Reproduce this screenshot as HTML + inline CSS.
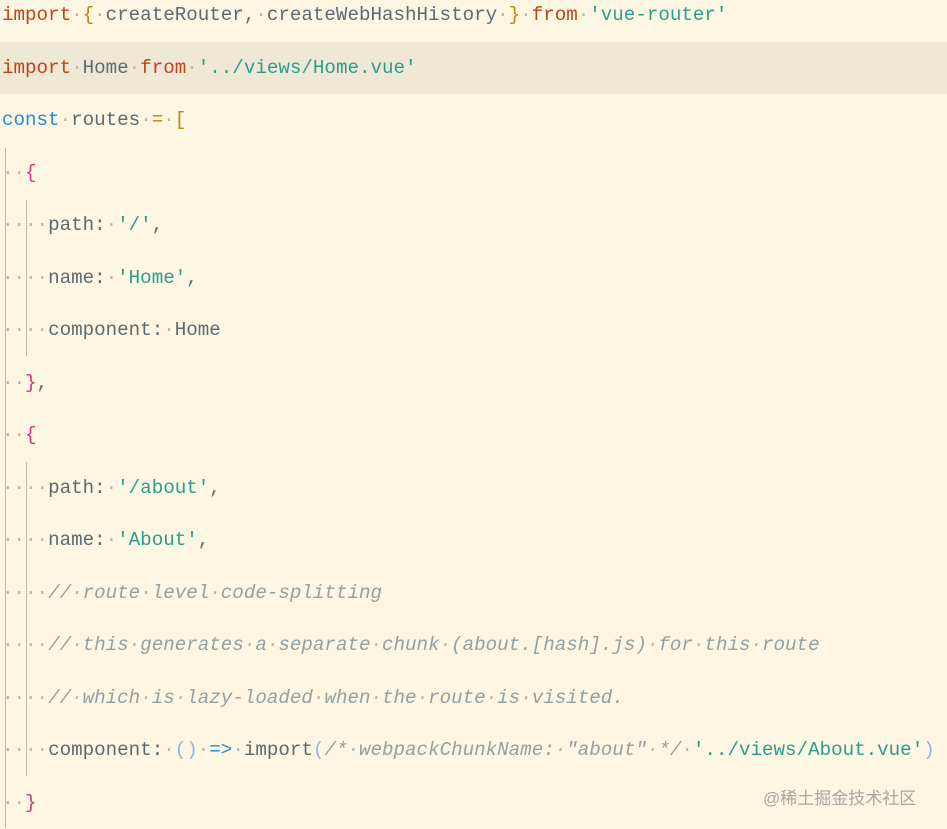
<!DOCTYPE html>
<html><head><meta charset="utf-8"><style>
body{margin:0;width:947px;height:828px;overflow:hidden;background:#fdf6e3;position:relative}
.code{position:absolute;left:2px;top:-11px;font-family:"Liberation Mono",monospace;font-size:19.2px;color:#5b6b70}
.l{height:52.5px;line-height:52.5px;position:relative;white-space:pre}
.hl{background:#eee8d5;margin-left:-2px;padding-left:2px;width:947px}
.k{color:#c0441a}.y{color:#b58900}.s{color:#2a9d8f}.b{color:#268bd2}.m{color:#d33682}
.c{color:#93a1a1;font-style:italic}.d{color:#b9b6a6}.p{color:#8fb8dc}
.g{position:absolute;width:1px;background:#bfbcae}
.wm{position:absolute;left:763px;top:784px;font-family:"Liberation Sans","Noto Sans CJK SC",sans-serif;font-size:17px;color:#a8a79e}
</style></head><body>
<div class="g" style="left:5px;top:148px;height:680px"></div>
<div class="g" style="left:26px;top:200px;height:156px"></div>
<div class="g" style="left:26px;top:462px;height:314px"></div>
<div class="code"><div class="l"><span class="k">import</span><span class="d">·</span><span class="y">{</span><span class="d">·</span>createRouter,<span class="d">·</span>createWebHashHistory<span class="d">·</span><span class="y">}</span><span class="d">·</span><span class="k">from</span><span class="d">·</span><span class="s">'vue-router'</span></div><div class="l hl"><span class="k">import</span><span class="d">·</span>Home<span class="d">·</span><span class="k">from</span><span class="d">·</span><span class="s">'../views/Home.vue'</span></div><div class="l"><span class="b">const</span><span class="d">·</span>routes<span class="d">·</span><span class="y">=</span><span class="d">·</span><span class="y">[</span></div><div class="l"><span class="d">··</span><span class="m">{</span></div><div class="l"><span class="d">····</span>path:<span class="d">·</span><span class="s">'/'</span>,</div><div class="l"><span class="d">····</span>name:<span class="d">·</span><span class="s">'Home'</span>,</div><div class="l"><span class="d">····</span>component:<span class="d">·</span>Home</div><div class="l"><span class="d">··</span><span class="m">}</span>,</div><div class="l"><span class="d">··</span><span class="m">{</span></div><div class="l"><span class="d">····</span>path:<span class="d">·</span><span class="s">'/about'</span>,</div><div class="l"><span class="d">····</span>name:<span class="d">·</span><span class="s">'About'</span>,</div><div class="l"><span class="d">····</span><span class="c">//<span class="d">·</span>route<span class="d">·</span>level<span class="d">·</span>code-splitting</span></div><div class="l"><span class="d">····</span><span class="c">//<span class="d">·</span>this<span class="d">·</span>generates<span class="d">·</span>a<span class="d">·</span>separate<span class="d">·</span>chunk<span class="d">·</span>(about.[hash].js)<span class="d">·</span>for<span class="d">·</span>this<span class="d">·</span>route</span></div><div class="l"><span class="d">····</span><span class="c">//<span class="d">·</span>which<span class="d">·</span>is<span class="d">·</span>lazy-loaded<span class="d">·</span>when<span class="d">·</span>the<span class="d">·</span>route<span class="d">·</span>is<span class="d">·</span>visited.</span></div><div class="l"><span class="d">····</span>component:<span class="d">·</span><span class="p">()</span><span class="d">·</span><span class="b">=&gt;</span><span class="d">·</span>import<span class="p">(</span><span class="c">/*<span class="d">·</span>webpackChunkName:<span class="d">·</span>"about"<span class="d">·</span>*/</span><span class="d">·</span><span class="s">'../views/About.vue'</span><span class="p">)</span></div><div class="l"><span class="d">··</span><span class="m">}</span></div></div>
<div class="wm">@稀土掘金技术社区</div>
</body></html>
